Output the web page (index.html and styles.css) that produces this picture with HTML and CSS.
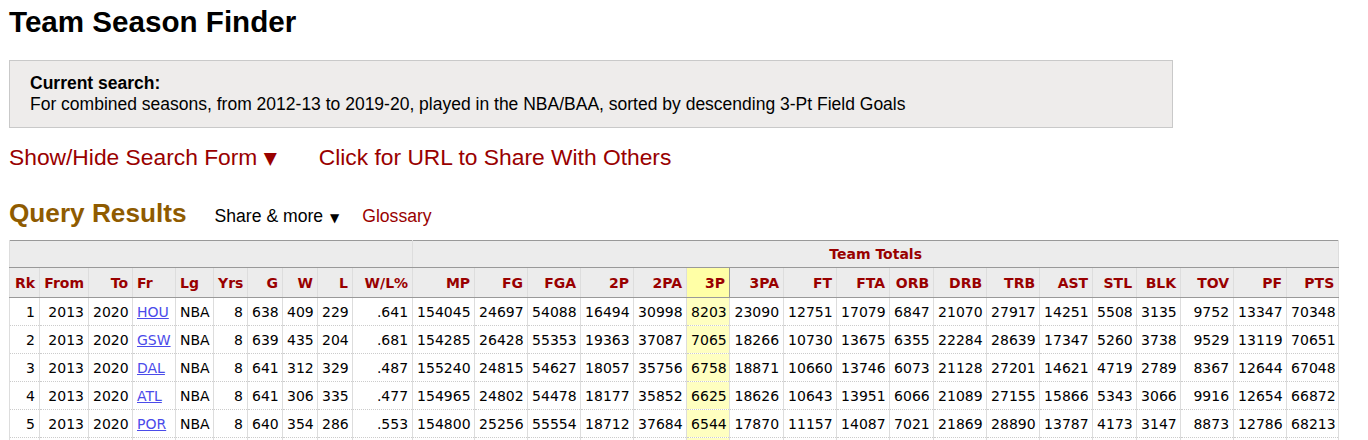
FILE: index.html
```html
<!DOCTYPE html>
<html lang="en">
<head>
<meta charset="utf-8">
<title>Team Season Finder</title>
<link rel="stylesheet" href="styles.css">
</head>
<body>
<div class="page">
  <h1 class="title">Team Season Finder</h1>
  <div class="search-box">
    <div class="search-label">Current search:</div>
    <div class="search-text">For combined seasons, from 2012-13 to 2019-20, played in the NBA/BAA, sorted by descending 3-Pt Field Goals</div>
  </div>
  <div class="links">
    <a class="red-link" href="#">Show/Hide Search Form <span class="arrow">▼</span></a>
    <a class="red-link" href="#">Click for URL to Share With Others</a>
  </div>
  <div class="results-head">
    <h2 class="results-title">Query Results</h2>
    <span class="share">Share &amp; more <span class="arrow-sm">▼</span></span>
    <a class="glossary" href="#">Glossary</a>
  </div>
  <table class="stats">
    <colgroup>
      <col><col><col><col><col><col><col><col><col><col>
      <col><col><col><col><col><col><col><col><col><col>
      <col><col><col><col><col><col><col><col>
    </colgroup>
    <thead>
      <tr class="over">
        <th colspan="10"></th>
        <th colspan="18" class="group">Team Totals</th>
      </tr>
      <tr class="head">
        <th class="r">Rk</th><th class="r">From</th><th class="r">To</th><th class="l">Fr</th><th class="l">Lg</th><th class="r">Yrs</th><th class="r">G</th><th class="r">W</th><th class="r">L</th><th class="r">W/L%</th>
        <th class="r">MP</th><th class="r">FG</th><th class="r">FGA</th><th class="r">2P</th><th class="r">2PA</th><th class="r sort">3P</th><th class="r">3PA</th><th class="r">FT</th><th class="r">FTA</th><th class="r">ORB</th><th class="r">DRB</th><th class="r">TRB</th><th class="r">AST</th><th class="r">STL</th><th class="r">BLK</th><th class="r">TOV</th><th class="r">PF</th><th class="r">PTS</th>
      </tr>
    </thead>
    <tbody>
      <tr><td>1</td><td>2013</td><td>2020</td><td class="l"><a href="#">HOU</a></td><td class="l">NBA</td><td>8</td><td>638</td><td>409</td><td>229</td><td>.641</td><td>154045</td><td>24697</td><td>54088</td><td>16494</td><td>30998</td><td class="sort">8203</td><td>23090</td><td>12751</td><td>17079</td><td>6847</td><td>21070</td><td>27917</td><td>14251</td><td>5508</td><td>3135</td><td>9752</td><td>13347</td><td>70348</td></tr>
      <tr><td>2</td><td>2013</td><td>2020</td><td class="l"><a href="#">GSW</a></td><td class="l">NBA</td><td>8</td><td>639</td><td>435</td><td>204</td><td>.681</td><td>154285</td><td>26428</td><td>55353</td><td>19363</td><td>37087</td><td class="sort">7065</td><td>18266</td><td>10730</td><td>13675</td><td>6355</td><td>22284</td><td>28639</td><td>17347</td><td>5260</td><td>3738</td><td>9529</td><td>13119</td><td>70651</td></tr>
      <tr><td>3</td><td>2013</td><td>2020</td><td class="l"><a href="#">DAL</a></td><td class="l">NBA</td><td>8</td><td>641</td><td>312</td><td>329</td><td>.487</td><td>155240</td><td>24815</td><td>54627</td><td>18057</td><td>35756</td><td class="sort">6758</td><td>18871</td><td>10660</td><td>13746</td><td>6073</td><td>21128</td><td>27201</td><td>14621</td><td>4719</td><td>2789</td><td>8367</td><td>12644</td><td>67048</td></tr>
      <tr><td>4</td><td>2013</td><td>2020</td><td class="l"><a href="#">ATL</a></td><td class="l">NBA</td><td>8</td><td>641</td><td>306</td><td>335</td><td>.477</td><td>154965</td><td>24802</td><td>54478</td><td>18177</td><td>35852</td><td class="sort">6625</td><td>18626</td><td>10643</td><td>13951</td><td>6066</td><td>21089</td><td>27155</td><td>15866</td><td>5343</td><td>3066</td><td>9916</td><td>12654</td><td>66872</td></tr>
      <tr><td>5</td><td>2013</td><td>2020</td><td class="l"><a href="#">POR</a></td><td class="l">NBA</td><td>8</td><td>640</td><td>354</td><td>286</td><td>.553</td><td>154800</td><td>25256</td><td>55554</td><td>18712</td><td>37684</td><td class="sort">6544</td><td>17870</td><td>11157</td><td>14087</td><td>7021</td><td>21869</td><td>28890</td><td>13787</td><td>4173</td><td>3147</td><td>8873</td><td>12786</td><td>68213</td></tr>
      <tr><td>&nbsp;</td><td></td><td></td><td></td><td></td><td></td><td></td><td></td><td></td><td></td><td></td><td></td><td></td><td></td><td></td><td class="sort"></td><td></td><td></td><td></td><td></td><td></td><td></td><td></td><td></td><td></td><td></td><td></td><td></td></tr>
    </tbody>
  </table>
</div>
</body>
</html>
```
FILE: styles.css
```css
html, body {
  margin: 0;
  padding: 0;
  background: #fff;
}
body {
  font-family: "Liberation Sans", Arial, sans-serif;
  color: #000;
}
.page {
  padding: 0 9px;
}
.title {
  margin: 0;
  padding-top: 4px;
  font-size: 29.6px;
  line-height: 36px;
  font-weight: bold;
  color: #000;
}
.search-box {
  margin-top: 20px;
  width: 1122px;
  background: #eeeceb;
  border: 1px solid #c9c9c9;
  padding: 12px 20px 12px 20px;
  font-size: 17.5px;
  line-height: 21px;
}
.search-label {
  font-weight: bold;
}
.links {
  display: flex;
  gap: 42px;
  margin-top: 15px;
  font-size: 22.8px;
  line-height: 28px;
}
.red-link {
  color: #990000;
  text-decoration: none;
}
.arrow {
  font-size: 17px;
  font-family: "DejaVu Sans", sans-serif;
  position: relative;
  top: -1px;
}
.results-head {
  display: flex;
  align-items: baseline;
  margin-top: 24px;
  height: 36px;
}
.results-title {
  margin: 0;
  font-size: 26.2px;
  font-weight: bold;
  color: #8f5b00;
  line-height: 32px;
}
.share {
  margin-left: 28px;
  font-size: 17.6px;
  color: #000;
}
.arrow-sm {
  font-size: 12px;
  font-family: "DejaVu Sans", sans-serif;
  margin-left: 2px;
}
.glossary {
  margin-left: 23px;
  font-size: 17.6px;
  color: #990000;
  text-decoration: none;
}
.stats {
  margin-top: 7px;
  table-layout: fixed;
  width: 1330px;
  border-collapse: collapse;
  border: 1px solid #999;
  font-family: "DejaVu Sans", Verdana, sans-serif;
  font-size: 14px;
  color: #000;
}
.stats col:nth-child(1) { width: 30px; }
.stats col:nth-child(2) { width: 49px; }
.stats col:nth-child(3) { width: 44px; }
.stats col:nth-child(4) { width: 43px; }
.stats col:nth-child(5) { width: 38px; }
.stats col:nth-child(6) { width: 34px; }
.stats col:nth-child(7) { width: 35px; }
.stats col:nth-child(8) { width: 35px; }
.stats col:nth-child(9) { width: 35px; }
.stats col:nth-child(10) { width: 60px; }
.stats col:nth-child(11) { width: 62px; }
.stats col:nth-child(12) { width: 53px; }
.stats col:nth-child(13) { width: 53px; }
.stats col:nth-child(14) { width: 53px; }
.stats col:nth-child(15) { width: 53px; }
.stats col:nth-child(16) { width: 43px; }
.stats col:nth-child(17) { width: 54px; }
.stats col:nth-child(18) { width: 53px; }
.stats col:nth-child(19) { width: 53px; }
.stats col:nth-child(20) { width: 44px; }
.stats col:nth-child(21) { width: 53px; }
.stats col:nth-child(22) { width: 53px; }
.stats col:nth-child(23) { width: 53px; }
.stats col:nth-child(24) { width: 44px; }
.stats col:nth-child(25) { width: 44px; }
.stats col:nth-child(26) { width: 53px; }
.stats col:nth-child(27) { width: 53px; }
.stats col:nth-child(28) { width: 52px; }

.stats th {
  background: #ececec;
  color: #990000;
  font-weight: bold;
  padding: 0 4px;
  border-left: 1px solid #ddd;
  border-right: 1px solid #ddd;
  white-space: nowrap;
  overflow: hidden;
}
.stats .over th {
  height: 26px;
  border-bottom: 1px solid #999;
  text-align: center;
}
.stats .head th {
  height: 29px;
  border-bottom: 1px solid #999;
}
.stats th.r { text-align: right; }
.stats th.l { text-align: left; }
.stats th.sort {
  background: #ffffa6;
  border-left: 1px solid #999;
  border-right: 1px solid #999;
}
.stats td {
  height: 27px;
  padding: 0 4px;
  text-align: right;
  white-space: nowrap;
  overflow: hidden;
  border-left: 1px solid #ddd;
  border-right: 1px solid #ddd;
  border-bottom: 1px dotted #ccc;
}
.stats td.l { text-align: left; }
.stats td.sort { background: #ffffc0; }
.stats td a {
  color: #4b4bea;
  text-decoration: underline;
}
```
